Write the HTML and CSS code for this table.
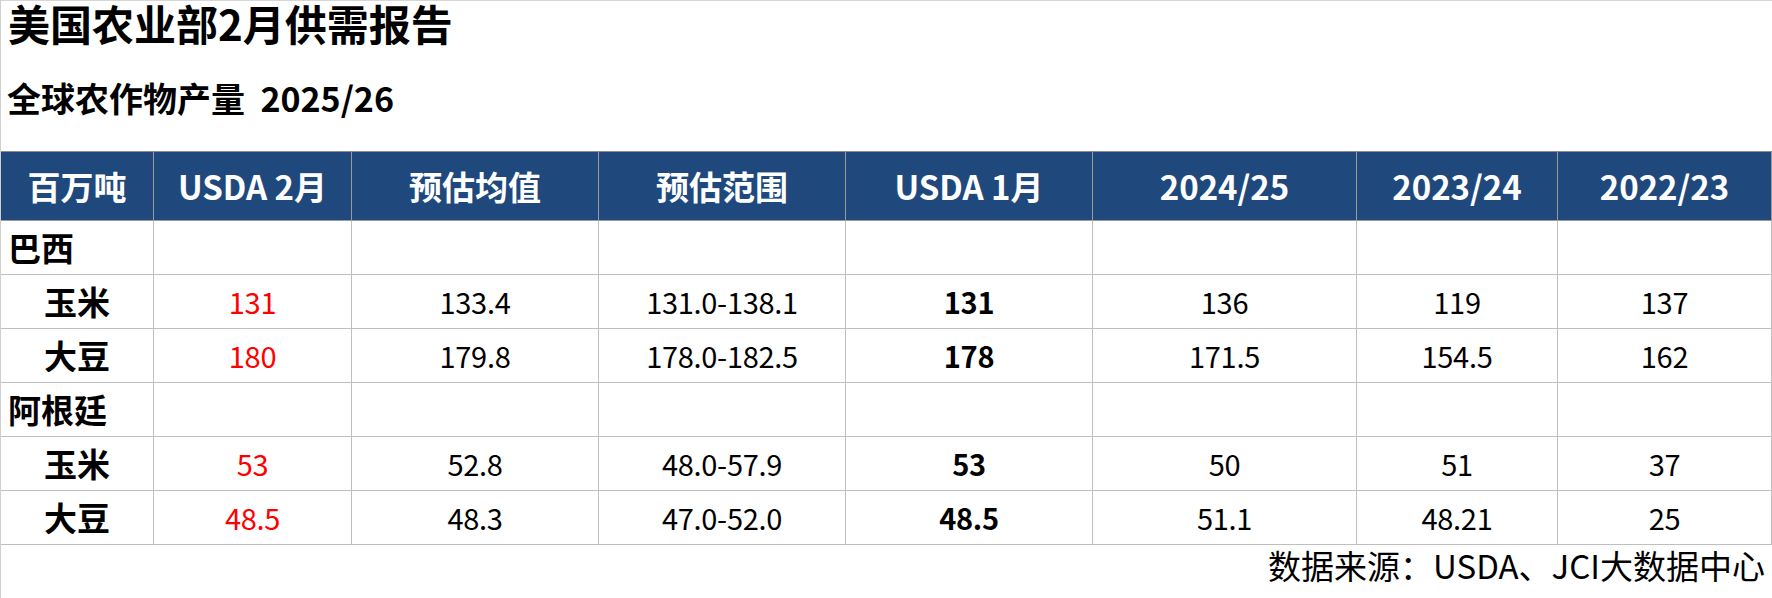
FILE: index.html
```html
<!DOCTYPE html>
<html lang="zh-CN">
<head>
<meta charset="utf-8">
<title>美国农业部2月供需报告</title>
<link rel="stylesheet" href="styles.css">
</head>
<body>
<div class="page">
  <h1 class="title">美国农业部2月供需报告</h1>
  <h2 class="subtitle">全球农作物产量&nbsp;&nbsp;2025/26</h2>
  <div class="grid">
    <div class="cell head">百万吨</div>
    <div class="cell head">USDA 2月</div>
    <div class="cell head">预估均值</div>
    <div class="cell head">预估范围</div>
    <div class="cell head">USDA 1月</div>
    <div class="cell head">2024/25</div>
    <div class="cell head">2023/24</div>
    <div class="cell head">2022/23</div>

    <div class="cell country">巴西</div>
    <div class="cell"></div><div class="cell"></div><div class="cell"></div><div class="cell"></div><div class="cell"></div><div class="cell"></div><div class="cell"></div>

    <div class="cell crop">玉米</div>
    <div class="cell red">131</div>
    <div class="cell">133.4</div>
    <div class="cell">131.0-138.1</div>
    <div class="cell bold">131</div>
    <div class="cell">136</div>
    <div class="cell">119</div>
    <div class="cell">137</div>

    <div class="cell crop">大豆</div>
    <div class="cell red">180</div>
    <div class="cell">179.8</div>
    <div class="cell">178.0-182.5</div>
    <div class="cell bold">178</div>
    <div class="cell">171.5</div>
    <div class="cell">154.5</div>
    <div class="cell">162</div>

    <div class="cell country">阿根廷</div>
    <div class="cell"></div><div class="cell"></div><div class="cell"></div><div class="cell"></div><div class="cell"></div><div class="cell"></div><div class="cell"></div>

    <div class="cell crop">玉米</div>
    <div class="cell red">53</div>
    <div class="cell">52.8</div>
    <div class="cell">48.0-57.9</div>
    <div class="cell bold">53</div>
    <div class="cell">50</div>
    <div class="cell">51</div>
    <div class="cell">37</div>

    <div class="cell crop">大豆</div>
    <div class="cell red">48.5</div>
    <div class="cell">48.3</div>
    <div class="cell">47.0-52.0</div>
    <div class="cell bold">48.5</div>
    <div class="cell">51.1</div>
    <div class="cell">48.21</div>
    <div class="cell">25</div>
  </div>
  <div class="source">数据来源：USDA、JCI大数据中心</div>
</div>
</body>
</html>
```

FILE: styles.css
```css
html, body {
  margin: 0;
  padding: 0;
  background: #ffffff;
}

body {
  width: 1772px;
  height: 598px;
  overflow: hidden;
  font-family: "Noto Sans CJK SC", "Noto Sans", sans-serif;
  color: #000000;
}

.page {
  box-sizing: border-box;
  width: 1772px;
  height: 598px;
  border-top: 1px solid #d6d6d6;
  border-left: 1px solid #cfcfcf;
}

.title {
  margin: 0;
  padding-left: 7px;
  height: 77px;
  font-size: 42px;
  line-height: 44px;
  font-weight: 700;
}

.subtitle {
  margin: 0;
  padding-left: 6px;
  height: 73px;
  font-size: 34px;
  line-height: 40px;
  font-weight: 700;
}

.grid {
  display: grid;
  grid-template-columns: 153px 198px 247px 247px 247px 264px 201px 214px;
  grid-template-rows: 69px repeat(6, 54px);
  border-top: 1px solid #8c8c8c;
}

.cell {
  box-sizing: border-box;
  display: flex;
  align-items: center;
  justify-content: center;
  border-right: 1px solid #bfbfbf;
  border-bottom: 1px solid #bfbfbf;
  font-size: 29px;
  letter-spacing: -0.3px;
  line-height: 1;
  white-space: nowrap;
}

.head {
  background: #1f497d;
  color: #ffffff;
  font-size: 33px;
  letter-spacing: 0;
  font-weight: 700;
  border-right-color: #9a9a9a;
  border-bottom-color: #9a9a9a;
}

.country {
  justify-content: flex-start;
  padding-left: 7px;
  font-size: 33px;
  letter-spacing: 0;
  font-weight: 700;
}

.crop {
  font-size: 33px;
  letter-spacing: 0;
  font-weight: 700;
}

.red {
  color: #ff0000;
}

.bold {
  font-weight: 700;
}

.source {
  text-align: right;
  padding-right: 7px;
  font-size: 33px;
  line-height: 40px;
}
```
